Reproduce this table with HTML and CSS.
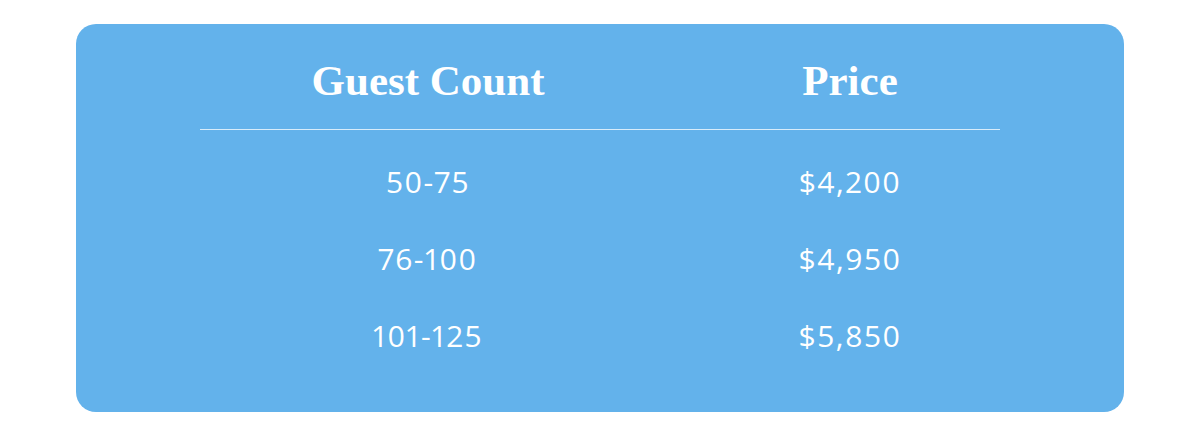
FILE: index.html
```html
<!DOCTYPE html>
<html lang="en">
<head>
<meta charset="utf-8">
<title>Pricing</title>
<link rel="stylesheet" href="styles.css">
</head>
<body>
<main class="page">
  <section class="card">
    <div class="table">
      <div class="row head">
        <div class="cell">Guest Count</div>
        <div class="cell">Price</div>
      </div>
      <div class="body">
        <div class="row">
          <div class="cell">50-75</div>
          <div class="cell">$4,200</div>
        </div>
        <div class="row">
          <div class="cell">76-100</div>
          <div class="cell">$4,950</div>
        </div>
        <div class="row">
          <div class="cell">101-125</div>
          <div class="cell">$5,850</div>
        </div>
      </div>
    </div>
  </section>
</main>
</body>
</html>
```

FILE: styles.css
```css
* { box-sizing: border-box; }
html, body { margin: 0; padding: 0; background: #ffffff; }
.page {
  padding: 24px 76px 25px;
}
.card {
  background: #63b2eb;
  border-radius: 20px;
  height: 388px;
  padding: 0 124px 36px;
  color: #ffffff;
}
.table {
  width: 800px;
}
.row {
  display: grid;
  grid-template-columns: 456px 300px;
  column-gap: 44px;
  justify-items: center;
  align-items: center;
}
.head {
  padding: 30px 0 22px;
  border-bottom: 1px solid rgba(255, 255, 255, 0.75);
  font-family: "Liberation Serif", "Times New Roman", serif;
  font-weight: 700;
  font-size: 43px;
  line-height: 53px;
}
.body {
  padding-top: 13px;
  font-family: "Open Sans", "DejaVu Sans", sans-serif;
  font-weight: 400;
  font-size: 30px;
  letter-spacing: 1.5px;
  font-variant-numeric: proportional-nums;
}
.body .row {
  height: 77px;
}
```
